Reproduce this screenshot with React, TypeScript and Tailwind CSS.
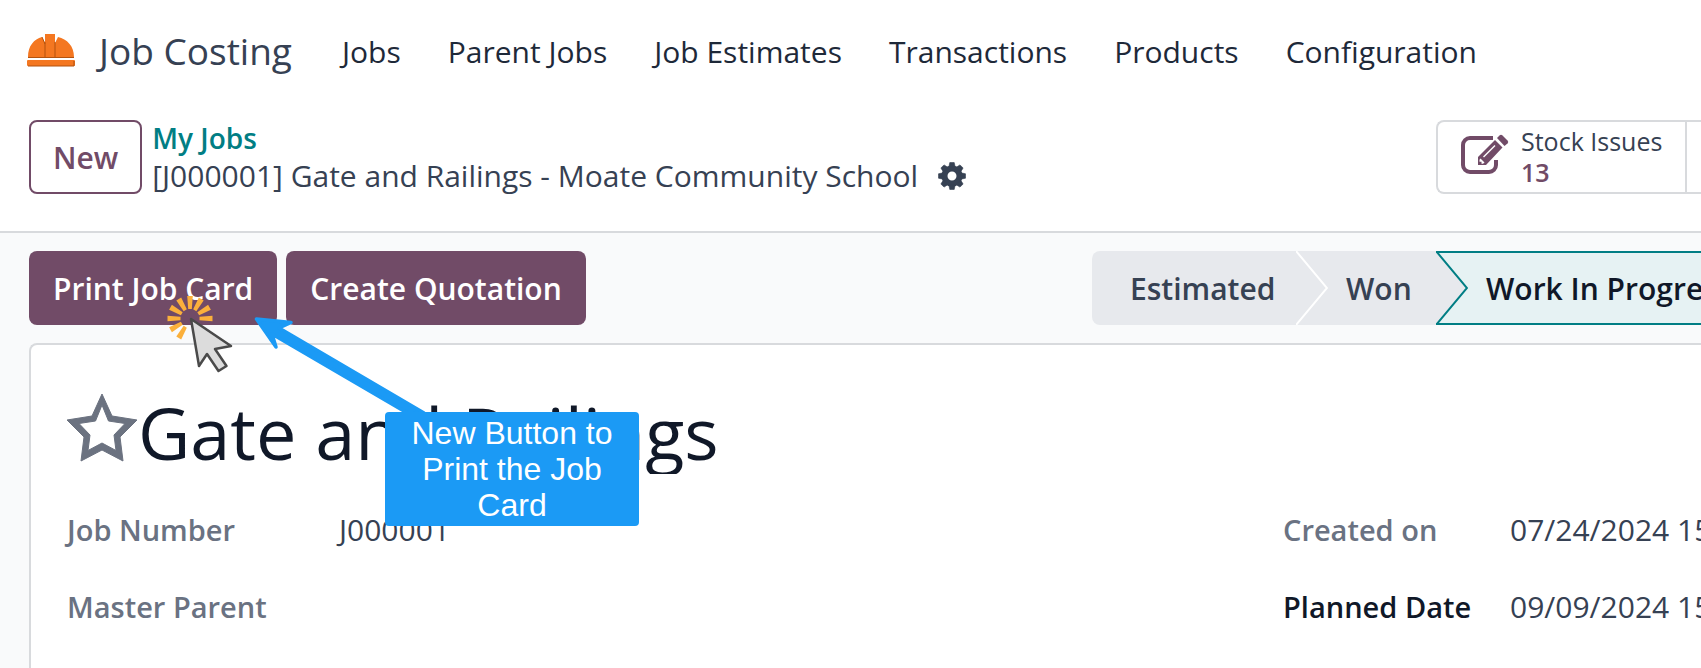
import React from "react";

const menuItems = [
  "Jobs",
  "Parent Jobs",
  "Job Estimates",
  "Transactions",
  "Products",
  "Configuration",
];

const gearTeeth = [0, 45, 90, 135, 180, 225, 270, 315];
const clickRays = [0, 30, 60, 90, 210, 240, 270, 300, 330];

const HelmetLogo: React.FC = () => (
  <svg viewBox="0 0 48 34" className="w-12 h-[34px] shrink-0" aria-hidden="true">
    <path d="M1 23C1 12 7 5 15 3l3 6V0h10v9l3-6c9 2 16 9 16 20z" fill="#f47721" />
    <path d="M1 23.500h46M18 23V8M28 23V8M15 3l3 7" stroke="#b4530f" strokeWidth="1" fill="none" />
    <rect x="0" y="26" width="48" height="6" rx="1" fill="#f47721" />
    <path d="M1 32h46M47 27v5" stroke="#b4530f" strokeWidth="1" />
  </svg>
);

const GearIcon: React.FC = () => (
  <svg viewBox="0 0 28 28" className="size-7" aria-hidden="true">
    <circle cx="14" cy="14" r="7.5" fill="none" stroke="currentColor" strokeWidth="6" />
    {gearTeeth.map((angle) => (
      <path
        key={angle}
        d="M10.8 5L11.8 0.5h4.4L17.2 5z"
        fill="currentColor"
        stroke="currentColor"
        strokeWidth="0.6"
        transform={`rotate(${angle} 14 14)`}
      />
    ))}
  </svg>
);

const EditIcon: React.FC = () => (
  <svg viewBox="0 0 48 46" className="w-12 h-[46px] shrink-0 text-[#714b67]" aria-hidden="true">
    <path
      d="M32 4H9a7 7 0 0 0-7 7v20a7 7 0 0 0 7 7h19a7 7 0 0 0 7-7v-5"
      fill="none"
      stroke="currentColor"
      strokeWidth="4"
    />
    <path d="M17 23L34 6l7.500 7.500L25 31h-8z" fill="currentColor" />
    <path d="M36 4l2.500-2.500q1.500-1.500 3 0l5 5q1.500 1.500 0 3L43.500 12z" fill="currentColor" />
    <path d="M22.500 23L34 11.500" stroke="#fff" strokeWidth="1.500" />
    <path d="M19.500 24.500l4 4-1.500 1.200h-1.500v-2h-2v-2z" fill="#fff" />
  </svg>
);

const NavBar: React.FC = () => (
  <nav className="flex items-center h-[102px] pl-[27px] whitespace-nowrap">
    <HelmetLogo />
    <a href="#" className="ml-6 text-[37px] text-gray-700">
      Job Costing
    </a>
    <div className="flex ml-[50px] gap-[47px] text-[30px] text-gray-800">
      {menuItems.map((item) => (
        <a key={item} href="#">
          {item}
        </a>
      ))}
    </div>
  </nav>
);

const ControlPanel: React.FC = () => (
  <div className="flex items-start justify-between h-[131px] pt-[18px] pl-[29px] whitespace-nowrap border-b-2 border-[#d8dadd]">
    <div className="flex">
      <button className="h-[74px] px-[22px] border-2 border-[#714b67] rounded-lg text-[30px] font-semibold text-[#714b67]">
        New
      </button>
      <div className="ml-2.5">
        <a href="#" className="block text-[28px] leading-9 font-semibold text-[#017e84]">
          My Jobs
        </a>
        <div className="flex items-center text-[30px] leading-10 text-gray-700">
          [J000001] Gate and Railings - Moate Community School
          <button aria-label="Actions" className="ml-5">
            <GearIcon />
          </button>
        </div>
      </div>
    </div>
    <div className="flex w-[265px] h-[74px] border-2 border-r-0 border-[#d8dadd] rounded-l-lg">
      <button className="flex items-center grow pl-[23px] text-left">
        <EditIcon />
        <span className="ml-3 text-[25px] leading-[31px] text-gray-700">
          Stock Issues
          <span className="block font-semibold text-[#714b67]">13</span>
        </span>
      </button>
      <div className="w-4 border-l-2 border-[#d8dadd]" />
    </div>
  </div>
);

const StatusBar: React.FC = () => (
  <div className="flex w-[609px] h-[74px] text-[30px] font-semibold text-gray-700 overflow-hidden">
    <button className="w-[204px] shrink-0 pl-[38px] text-left bg-[#e7e9ed] rounded-l-lg">
      Estimated
    </button>
    <button className="flex items-center w-[140px] shrink-0 bg-[#e7e9ed]">
      <svg viewBox="0 0 32 74" className="w-8 h-full shrink-0" aria-hidden="true">
        <path d="M0 0L31 37L0 74" fill="none" stroke="#fff" strokeWidth="2" />
      </svg>
      <span className="ml-[18px]">Won</span>
    </button>
    <button className="flex items-center shrink-0 bg-[#e6f2f3] border-y-2 border-[#017e84] text-gray-900 whitespace-nowrap">
      <svg viewBox="0 0 32 70" className="w-8 h-full shrink-0" aria-hidden="true">
        <path d="M0 -2L31 35L0 72z" fill="#e7e9ed" />
        <path d="M0 -2L31 35L0 72" fill="none" stroke="#017e84" strokeWidth="2" />
      </svg>
      <span className="ml-[18px]">Work In Progress</span>
    </button>
  </div>
);

const Callout: React.FC = () => (
  <>
    <svg
      viewBox="0 0 300 140"
      className="absolute left-[160px] top-[290px] w-[300px] h-[140px] pointer-events-none"
      aria-hidden="true"
    >
      <path
        d="M96.500 29L131 32.500L119 38L264 123L249 124L112 44L116 57z"
        fill="#1b9af5"
        stroke="#1b9af5"
        strokeWidth="3.500"
        strokeLinejoin="round"
      />
      {clickRays.map((angle) => (
        <path
          key={angle}
          d="M27.200 6h5.600l-1 13h-3.600z"
          fill="#fbb03b"
          transform={`rotate(${angle} 30 28.500)`}
        />
      ))}
      <path
        d="M31 29L71 56L55 59L66.500 76L58.500 81L47 64L39 76z"
        fill="#dcdcdc"
        stroke="#4a4a4a"
        strokeWidth="2.500"
        strokeLinejoin="round"
      />
    </svg>
    <div className="absolute left-[385px] top-[412px] w-[254px] px-4 py-[3px] rounded bg-[#1b9af5] text-center text-white text-[32px] leading-9 font-['Liberation_Sans',sans-serif]">
      New Button to Print the Job Card
    </div>
  </>
);

export default function App() {
  return (
    <div className="relative flex flex-col min-h-screen overflow-hidden bg-white font-['Open_Sans',sans-serif]">
      <NavBar />
      <ControlPanel />
      <main className="flex flex-col grow pl-[29px] bg-[#f9fafb]">
        <div className="flex justify-between py-[18px] whitespace-nowrap">
          <div className="flex gap-[9px] text-[30px] font-semibold text-white">
            <button className="h-[74px] px-6 rounded-lg bg-[#714b67]">Print Job Card</button>
            <button className="h-[74px] px-6 rounded-lg bg-[#714b67]">Create Quotation</button>
          </div>
          <StatusBar />
        </div>

        <section className="grow pl-[35px] pt-[45px] border-l-2 border-t-2 border-[#d8dadd] rounded-tl-lg bg-white text-[30px] text-gray-700">
          <div className="flex items-start">
            <button aria-label="Favorite" className="shrink-0">
              <svg viewBox="0 0 72 72" className="size-[72px]" aria-hidden="true">
                <path
                  d="M36 4L46 26L71 30L54 47L57 71L36 60L15 71L18 47L1 30L26 26zM36 15L29.500 31L13 33.500L24 45L22 60.500L36 53L50 60.500L48 45L59 33.500L42.500 31z"
                  fill="#6b7280"
                  stroke="#6b7280"
                  strokeLinejoin="round"
                  fillRule="evenodd"
                />
              </svg>
            </button>
            <input
              aria-label="Job title"
              defaultValue="Gate and Railings"
              className="grow h-[84px] text-[72px] text-gray-900 outline-none"
            />
          </div>
          <div className="flex justify-between pl-px mt-9 whitespace-nowrap">
            <dl className="grid grid-cols-[272px_auto] content-start gap-y-[37px] leading-10">
              <dt className="text-[29px] font-semibold text-gray-500">Job Number</dt>
              <dd>J000001</dd>
              <dt className="text-[29px] font-semibold text-gray-500">Master Parent</dt>
              <dd />
            </dl>
            <div className="grid grid-cols-[227px_191px] content-start gap-y-[37px] leading-10">
              <span className="text-[29px] font-semibold text-gray-500">Created on</span>
              <span className="overflow-hidden">07/24/2024 15:00:00</span>
              <label htmlFor="planned" className="text-[29px] font-semibold text-gray-900">
                Planned Date
              </label>
              <input id="planned" defaultValue="09/09/2024 15:00:00" className="w-full outline-none" />
            </div>
          </div>
        </section>
      </main>
      <Callout />
    </div>
  );
}
